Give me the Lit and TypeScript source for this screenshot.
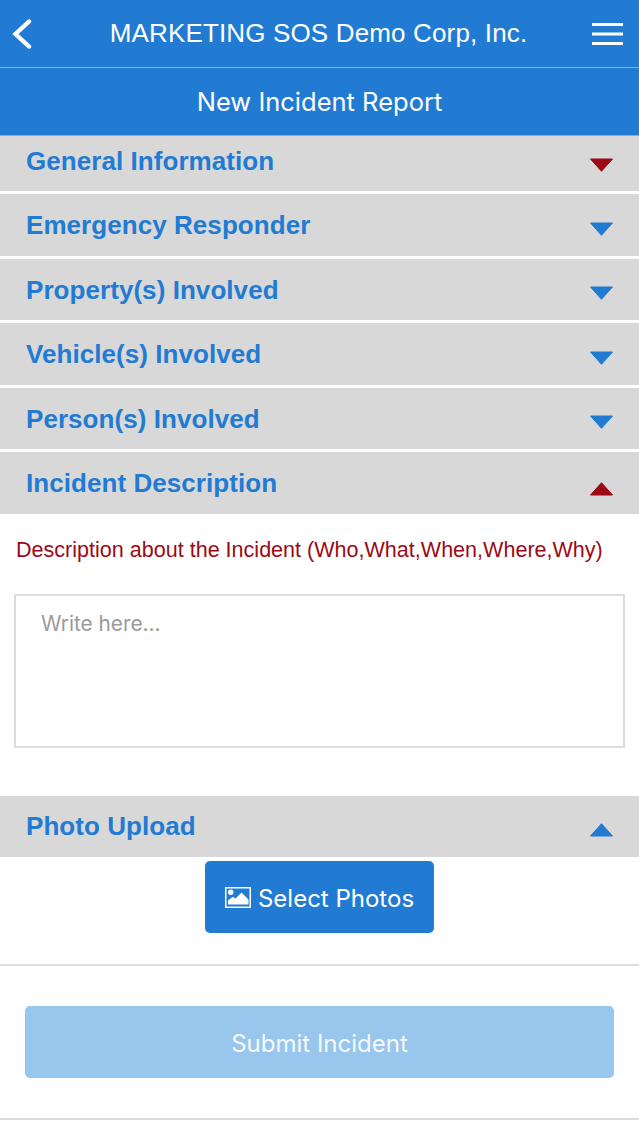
import { LitElement, html, css } from "lit";
import { customElement } from "lit/decorators.js";

const BLUE = "#217bd3";
const RED = "#9b0a14";

const sections: [string, boolean, boolean][] = [
  ["General Information", true, false],
  ["Emergency Responder", false, false],
  ["Property(s) Involved", false, false],
  ["Vehicle(s) Involved", false, false],
  ["Person(s) Involved", false, false],
  ["Incident Description", true, true],
];

@customElement("app-root")
export class AppRoot extends LitElement {
  static styles = css`
    :host { display: block; width: 639px; height: 1136px; overflow: hidden; background: #fff; font-family: "Liberation Sans", Arial, sans-serif; }
    .top { height: 68px; box-sizing: border-box; background: #217bd3; display: grid; grid-template-columns: 1fr auto 1fr; align-items: center; padding: 0 16px 0 12px; color: #fff; border-bottom: 1px solid #8fb3d8; }
    .top svg { display: block; }
    .top .menu { justify-self: end; }
    .brand { font-size: 26px; letter-spacing: 0.15px; white-space: nowrap; padding-left: 2px; }
    .sub { height: 68px; box-sizing: border-box; background: #217bd3; color: #fff; display: flex; align-items: center; justify-content: center; font-family: Inter, sans-serif; font-size: 25.5px; border-bottom: 1px solid #a8a8a8; }
    .rows { display: flex; flex-direction: column; gap: 3px; }
    .row { background: #d8d8d8; height: 61.5px; display: flex; align-items: center; justify-content: space-between; padding: 0 26px; font-size: 26px; letter-spacing: 0.06px; font-weight: 700; color: #217bd3; box-sizing: border-box; }
    .row.first { height: 55px; }
    .row.first .label { margin-top: -4px; }
    .label { margin-top: 1.6px; }
    .row svg { display: block; margin: 8px 0 0 0; }
    .row.first svg { margin-top: 2px; }
    .row.up svg { margin-top: 12px; }
    .photo .row.up svg { margin-top: 8px; }
    .photo .label { margin-top: 0; }
    .body { padding: 0 14px; }
    .hint { color: #9b0a14; font-size: 21.55px; line-height: 26px; padding: 23px 0 0 2px; white-space: nowrap; }
    .box { margin-top: 31px; height: 154px; box-sizing: border-box; border: 2px solid #dcdcdc; padding: 15px 25px; font-family: Inter, sans-serif; font-size: 20.8px; line-height: 26px; color: #9a9a9a; }
    .photo { margin-top: 48px; height: 61px; }
    .center { display: flex; justify-content: center; padding-top: 4px; height: 109px; box-sizing: border-box; border-bottom: 2px solid #dcdcdc; }
    .btn { border-radius: 5px; color: #fff; font-family: Inter, sans-serif; font-size: 24px; display: flex; align-items: center; justify-content: center; height: 72px; box-sizing: border-box; }
    .btn > span { padding-top: 3px; }
    .select { background: #217bd3; width: 229px; gap: 7px; }
    .select svg { margin-top: 2px; }
    .foot { padding: 40px 25px 40px; border-bottom: 2px solid #dcdcdc; }
    .submit { background: #99c6ec; color: #f5f9fd; }
  `;

  private arrow(up: boolean, red: boolean) {
    return html`<svg width="23" height="14" viewBox="0 0 23 14" style="fill:${red ? RED : BLUE};stroke:${red ? RED : BLUE}" stroke-width="1" stroke-linejoin="round">
      <path d=${up ? "M11.5 .7 L22.5 13 L.5 13 Z" : "M.5 1 L22.5 1 L11.5 13.3 Z"}></path>
    </svg>`;
  }

  private row(label: string, red: boolean, up: boolean, first = false) {
    return html`<div class="row ${first ? "first" : ""} ${up ? "up" : ""}"><span class="label">${label}</span>${this.arrow(up, red)}</div>`;
  }

  render() {
    return html`
      <div class="top">
        <svg width="20" height="32" viewBox="0 0 20 32" fill="none" stroke="#fff" stroke-width="4.4" stroke-linecap="round" stroke-linejoin="miter">
          <path d="M17 3.5 L3.5 16 L17 28.5"></path>
        </svg>
        <span class="brand">MARKETING SOS Demo Corp, Inc.</span>
        <svg class="menu" width="31" height="22" viewBox="0 0 31 22" fill="#fff">
          <rect y="0" width="31" height="3"></rect><rect y="9.5" width="31" height="3"></rect><rect y="19" width="31" height="3"></rect>
        </svg>
      </div>
      <div class="sub"><span>New Incident Report</span></div>
      <div class="rows">
        ${sections.map(([l, r, u], i) => this.row(l, r, u, i === 0))}
      </div>
      <div class="body">
        <div class="hint">Description about the Incident (Who,What,When,Where,Why)</div>
        <div class="box">Write here...</div>
      </div>
      <div class="photo">${this.row("Photo Upload", false, true)}</div>
      <div class="center">
        <div class="btn select">
          <svg width="26" height="21" viewBox="0 0 26 21">
            <rect x=".75" y=".75" width="24.5" height="19.5" fill="none" stroke="#fff" stroke-width="1.5"></rect>
            <circle cx="5.7" cy="5.3" r="2.7" fill="#fff"></circle>
            <path d="M3 17.5 V13.5 L8 9.7 L10.5 11.5 L16.5 5.5 L23.5 12.5 V17.5 Z" fill="#fff"></path>
          </svg>
          <span>Select Photos</span>
        </div>
      </div>
      <div class="foot"><div class="btn submit"><span>Submit Incident</span></div></div>
    `;
  }
}
